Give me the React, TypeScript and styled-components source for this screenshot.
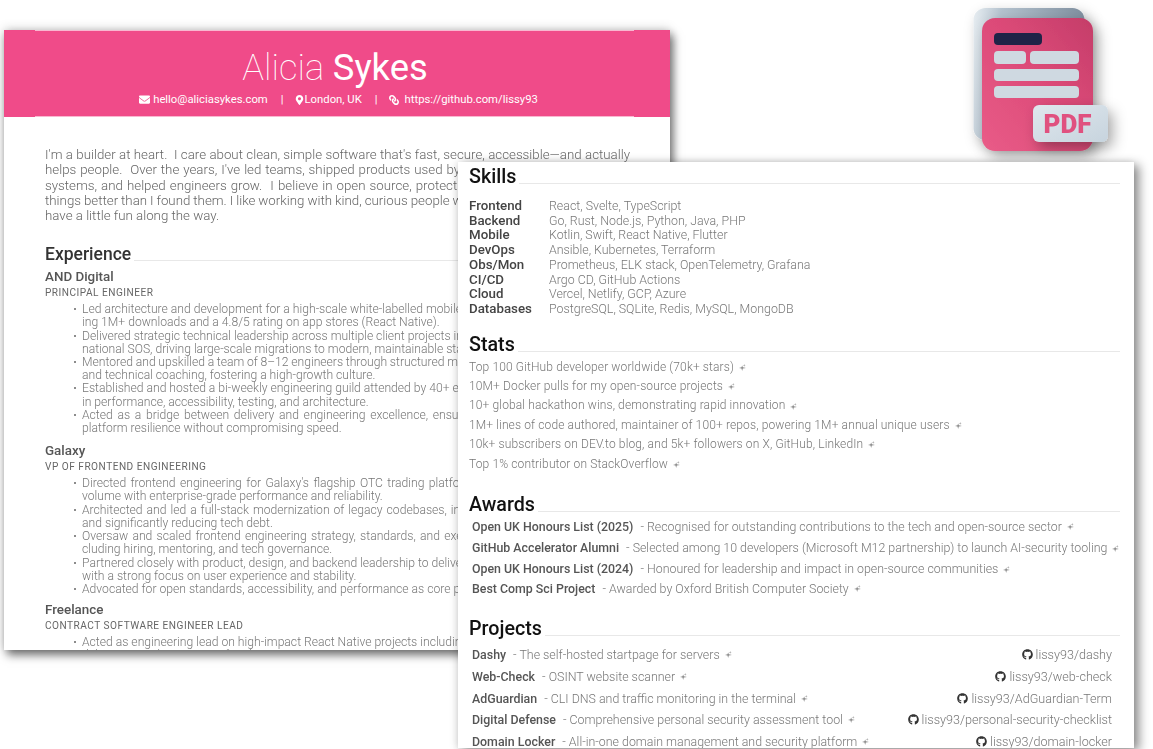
import React from "react";
import styled, { createGlobalStyle } from "styled-components";
import { FaEnvelope, FaMapMarkerAlt, FaLink, FaGithub } from "react-icons/fa";

const Global = createGlobalStyle`
  html, body { margin: 0; padding: 0; background: #fff; }
  body { font-family: Roboto, "Liberation Sans", sans-serif; }
`;

const Canvas = styled.div`
  position: relative;
  width: 1153px;
  height: 749px;
  overflow: hidden;
  background: #fff;
`;

const ResumeSheet = styled.section`
  position: absolute;
  left: 4px;
  top: 30px;
  width: 666px;
  height: 620px;
  background: #fff;
  box-shadow: 3px 5px 9px rgba(0, 0, 0, 0.55), 0 -1px 10px rgba(0, 0, 0, 0.18);
  overflow: hidden;
  filter: blur(0.45px);
`;

const Banner = styled.header`
  height: 87px;
  box-sizing: border-box;
  background: #f04b89;
  color: #fff;
  display: flex;
  flex-direction: column;
  align-items: center;
  position: relative;
  padding-top: 18px;
  &::before, &::after {
    content: "";
    position: absolute;
    left: 31px;
    right: 36px;
    height: 1px;
    background: rgba(255, 255, 255, 0.6);
  }
  &::before { top: 0; }
  &::after { bottom: 0; }
`;

const Name = styled.h1`
  margin: 0 4px 0 0;
  font-size: 36.4px;
  line-height: 40px;
  font-weight: 100;
  b { font-weight: 400; }
`;

const Contacts = styled.div`
  display: flex;
  align-items: center;
  margin-top: 5px;
  margin-left: 3px;
  font-size: 11.3px;
  line-height: 13px;
  font-weight: 400;
`;

const Contact = styled.span`
  display: flex;
  align-items: center;
`;

const MailIcon = styled(FaEnvelope)`
  width: 11px;
  height: 11px;
  margin-right: 3px;
`;

const PinIcon = styled(FaMapMarkerAlt)`
  width: 9px;
  height: 10px;
  margin-right: 1px;
`;

const ChainIcon = styled(FaLink)`
  width: 10px;
  height: 10px;
  margin-right: 6px;
  transform: scaleX(-1);
`;

const Pipe = styled.span`
  margin: 0 11px 0 13px;
`;

const ResumeBody = styled.div`
  padding: 30px 0 0 41px;
`;

const Intro = styled.div`
  font-size: 13.3px;
  line-height: 15.25px;
  font-weight: 300;
  color: #666;
`;

const IntroLine = styled.div<{ $justify?: boolean; $sp?: number }>`
  white-space: nowrap;
  width: 585px;
  word-spacing: ${(p) => p.$sp ?? 0}px;
  text-align-last: ${(p) => (p.$justify ? "justify" : "left")};
`;

const SectionHead = styled.div<{ $gap: number }>`
  display: flex;
  align-items: flex-end;
  margin-top: ${(p) => p.$gap}px;
  font-size: 19.7px;
  line-height: 20px;
  font-weight: 500;
  color: #111;
  &::after {
    content: "";
    flex: 1;
    height: 1px;
    background: #e8e8e8;
    margin: 0 0 3px 3px;
  }
`;

const ExperienceHead = styled(SectionHead)`
  width: 590px;
  font-size: 17.5px;
  color: #333;
`;

const Employer = styled.div<{ $gap: number }>`
  margin-top: ${(p) => p.$gap}px;
  font-size: 13.4px;
  line-height: 15px;
  font-weight: 500;
  color: #555;
`;

const Role = styled.div`
  margin-top: 2px;
  font-size: 10.1px;
  line-height: 13px;
  letter-spacing: 0.5px;
  color: #666;
`;

const Bullets = styled.ul`
  list-style: none;
  margin: 4px 0 0;
  padding: 0 0 0 37px;
  font-size: 12.15px;
  line-height: 13.2px;
  font-weight: 300;
  color: #777;
`;

const Bullet = styled.li`
  position: relative;
  white-space: nowrap;
  &::before {
    content: "";
    position: absolute;
    left: -8px;
    top: 5px;
    width: 2px;
    height: 2px;
    border-radius: 50%;
    background: #666;
  }
`;

const Spaced = styled.span<{ $sp: number }>`
  word-spacing: ${(p) => p.$sp}px;
`;

const ExtrasSheet = styled.section`
  position: absolute;
  left: 458px;
  top: 162px;
  width: 676px;
  height: 586px;
  box-sizing: border-box;
  padding: 5px 14px 0 11px;
  background: #fff;
  box-shadow: 5px 3px 10px rgba(0, 0, 0, 0.45), -2px 0 8px rgba(0, 0, 0, 0.1);
  overflow: hidden;
  filter: blur(0.4px);
`;

const SkillGrid = styled.dl`
  display: grid;
  grid-template-columns: 80px 1fr;
  margin: 12px 0 0;
  font-size: 12.4px;
  line-height: 14.7px;
  color: #777;
  font-weight: 300;
  dt { font-weight: 500; font-size: 13.3px; color: #444; }
  dd { margin: 0; }
`;

const StatList = styled.div`
  margin-top: 3px;
  font-size: 12.03px;
  line-height: 19.4px;
  font-weight: 300;
  letter-spacing: 0.12px;
  color: #777;
`;

const StatRow = styled.div`
  display: flex;
  align-items: center;
  white-space: nowrap;
`;

const AwardList = styled.div`
  margin-top: 1px;
  padding-left: 3px;
  font-size: 12.37px;
  font-weight: 300;
  color: #777;
`;

const AwardRow = styled.div<{ $h: number }>`
  display: flex;
  align-items: center;
  white-space: nowrap;
  height: ${(p) => p.$h}px;
`;

const Strong = styled.strong`
  font-weight: 500;
  color: #555;
  margin-right: 7px;
`;

const ProjectList = styled.div`
  margin-top: 5px;
  padding: 0 8px 0 3px;
  font-size: 12.4px;
  font-weight: 300;
  color: #777;
`;

const ProjectRow = styled.div`
  display: flex;
  align-items: center;
  justify-content: space-between;
  height: 21.6px;
  white-space: nowrap;
`;

const ProjectInfo = styled.div`
  display: flex;
  align-items: center;
`;

const RepoLink = styled.span`
  display: flex;
  align-items: center;
  font-size: 12.6px;
  color: #777;
  svg { width: 11px; height: 11px; margin-right: 3px; color: #333; }
`;

const Badge = styled.div`
  position: absolute;
  left: 970px;
  top: 4px;
  width: 144px;
  height: 156px;
  filter: blur(0.5px);
`;

const PdfArt = styled.svg`
  display: block;
  width: 144px;
  height: 156px;
  overflow: visible;
`;

const SparkIcon = styled.svg`
  width: 7px;
  height: 7px;
  margin-left: 5px;
  flex: none;
`;

const Spark = () => (
  <SparkIcon viewBox="0 0 10 10" aria-hidden="true">
    <path d="M4.5 2 5.4 4.8 10 5.6 5.4 6.3 4.5 10 3.6 6.3 0 5.6 3.6 4.8Z" fill="#888" />
    <path d="M7.5 0 8 1.4 9.5 2 8 2.5 7.5 4 7 2.5 5.6 2 7 1.4Z" fill="#aaa" />
  </SparkIcon>
);

const skills = [
  ["Frontend", "React, Svelte, TypeScript"],
  ["Backend", "Go, Rust, Node.js, Python, Java, PHP"],
  ["Mobile", "Kotlin, Swift, React Native, Flutter"],
  ["DevOps", "Ansible, Kubernetes, Terraform"],
  ["Obs/Mon", "Prometheus, ELK stack, OpenTelemetry, Grafana"],
  ["CI/CD", "Argo CD, GitHub Actions"],
  ["Cloud", "Vercel, Netlify, GCP, Azure"],
  ["Databases", "PostgreSQL, SQLite, Redis, MySQL, MongoDB"],
];

const stats = [
  "Top 100 GitHub developer worldwide (70k+ stars)",
  "10M+ Docker pulls for my open-source projects",
  "10+ global hackathon wins, demonstrating rapid innovation",
  "1M+ lines of code authored, maintainer of 100+ repos, powering 1M+ annual unique users",
  "10k+ subscribers on DEV.to blog, and 5k+ followers on X, GitHub, LinkedIn",
  "Top 1% contributor on StackOverflow",
];

const awards: [string, string, number][] = [
  ["Open UK Honours List (2025)", "- Recognised for outstanding contributions to the tech and open-source sector", 21],
  ["GitHub Accelerator Alumni", "- Selected among 10 developers (Microsoft M12 partnership) to launch AI-security tooling", 22],
  ["Open UK Honours List (2024)", "- Honoured for leadership and impact in open-source communities", 20],
  ["Best Comp Sci Project", "- Awarded by Oxford British Computer Society", 19],
];

const projects = [
  ["Dashy", "- The self-hosted startpage for servers", "lissy93/dashy"],
  ["Web-Check", "- OSINT website scanner", "lissy93/web-check"],
  ["AdGuardian", "- CLI DNS and traffic monitoring in the terminal", "lissy93/AdGuardian-Term"],
  ["Digital Defense", "- Comprehensive personal security assessment tool", "lissy93/personal-security-checklist"],
  ["Domain Locker", "- All-in-one domain management and security platform", "lissy93/domain-locker"],
];

const jobs = [
  {
    name: "AND Digital",
    role: "PRINCIPAL ENGINEER",
    gap: 5,
    lines: [
      [
        "Led architecture and development for a high-scale white-labelled mobile app, reach-",
        "ing 1M+ downloads and a 4.8/5 rating on app stores (React Native).",
      ],
      [
        "Delivered strategic technical leadership across multiple client projects including Inter-",
        "national SOS, driving large-scale migrations to modern, maintainable stacks.",
      ],
      [
        <Spaced key="w" $sp={-0.3}>Mentored and upskilled a team of 8–12 engineers through structured mentoring</Spaced>,
        "and technical coaching, fostering a high-growth culture.",
      ],
      [
        "Established and hosted a bi-weekly engineering guild attended by 40+ engineers",
        "in performance, accessibility, testing, and architecture.",
      ],
      [
        <Spaced key="w" $sp={1.7}>Acted as a bridge between delivery and engineering excellence, ensuring</Spaced>,
        "platform resilience without compromising speed.",
      ],
    ],
  },
  {
    name: "Galaxy",
    role: "VP OF FRONTEND ENGINEERING",
    gap: 8,
    lines: [
      [
        <Spaced key="w" $sp={1.4}>Directed frontend engineering for Galaxy's flagship OTC trading platform</Spaced>,
        "volume with enterprise-grade performance and reliability.",
      ],
      [
        <Spaced key="w" $sp={1}>Architected and led a full-stack modernization of legacy codebases, improving</Spaced>,
        "and significantly reducing tech debt.",
      ],
      [
        <Spaced key="w" $sp={1.3}>Oversaw and scaled frontend engineering strategy, standards, and execution, in-</Spaced>,
        "cluding hiring, mentoring, and tech governance.",
      ],
      [
        "Partnered closely with product, design, and backend leadership to deliver",
        "with a strong focus on user experience and stability.",
      ],
      ["Advocated for open standards, accessibility, and performance as core principles."],
    ],
  },
  {
    name: "Freelance",
    role: "CONTRACT SOFTWARE ENGINEER LEAD",
    gap: 6,
    lines: [["Acted as engineering lead on high-impact React Native projects including"], ["delivering production apps for clients."]],
  },
];

const PdfIcon = () => (
  <PdfArt viewBox="0 0 144 156">
    <defs>
      <linearGradient id="back" x1="0" y1="0" x2="1" y2="0.15">
        <stop offset="0" stopColor="#e8eef2" />
        <stop offset="0.25" stopColor="#b4c2ce" />
        <stop offset="1" stopColor="#7e8e9e" />
      </linearGradient>
      <linearGradient id="front" x1="0" y1="1" x2="1" y2="0">
        <stop offset="0" stopColor="#e95c88" />
        <stop offset="0.55" stopColor="#dc4a78" />
        <stop offset="1" stopColor="#c43d69" />
      </linearGradient>
      <linearGradient id="tag" x1="0" y1="0" x2="1" y2="1">
        <stop offset="0" stopColor="#dfe7ed" />
        <stop offset="1" stopColor="#c7d4de" />
      </linearGradient>
      <filter id="soft" x="-40%" y="-40%" width="200%" height="200%">
        <feDropShadow dx="5" dy="6" stdDeviation="7" floodColor="#000" floodOpacity="0.32" />
      </filter>
    </defs>
    <rect x="3.5" y="4" width="111" height="132" rx="12" fill="url(#back)" filter="url(#soft)" />
    <rect x="12" y="14" width="111" height="133" rx="13" fill="url(#front)" filter="url(#soft)" />
    <rect x="24" y="29" width="48" height="12" rx="4" fill="#1f2347" />
    <rect x="24" y="47" width="32" height="13" rx="4" fill="#cfd9e1" />
    <rect x="60" y="47" width="49" height="13" rx="4" fill="#cfd9e1" />
    <rect x="24" y="65" width="85" height="12" rx="4" fill="#cfd9e1" />
    <rect x="24" y="82" width="85" height="12" rx="4" fill="#cfd9e1" />
    <rect x="63" y="101" width="75" height="37" rx="6" fill="url(#tag)" filter="url(#soft)" />
    <text x="97.5" y="129" textAnchor="middle" fontFamily="Roboto, sans-serif" fontWeight="900" fontSize="26" fill="#e0517f">
      PDF
    </text>
  </PdfArt>
);

export default function App() {
  return (
    <Canvas>
      <Global />
      <ResumeSheet>
        <Banner>
          <Name>
            Alicia <b>Sykes</b>
          </Name>
          <Contacts>
            <Contact>
              <MailIcon />
              hello@aliciasykes.com
            </Contact>
            <Pipe>|</Pipe>
            <Contact>
              <PinIcon />
              London, UK
            </Contact>
            <Pipe>|</Pipe>
            <Contact>
              <ChainIcon />
              https://github.com/lissy93
            </Contact>
          </Contacts>
        </Banner>
        <ResumeBody>
          <Intro>
            <IntroLine $justify>
              I'm a builder at heart.&nbsp; I care about clean, simple software that's fast, secure, accessible—and actually
            </IntroLine>
            <IntroLine $sp={0.7}>helps people.&nbsp; Over the years, I've led teams, shipped products used by millions of people, built</IntroLine>
            <IntroLine $sp={0.8}>systems, and helped engineers grow.&nbsp; I believe in open source, protecting privacy, and leaving</IntroLine>
            <IntroLine $sp={-0.3}>things better than I found them. I like working with kind, curious people who care, and I try to</IntroLine>
            <IntroLine>have a little fun along the way.</IntroLine>
          </Intro>
          <ExperienceHead $gap={21}>Experience</ExperienceHead>
          {jobs.map((job) => (
            <React.Fragment key={job.name}>
              <Employer $gap={job.gap}>{job.name}</Employer>
              <Role>{job.role}</Role>
              <Bullets>
                {job.lines.map((item, i) => (
                  <Bullet key={i}>
                    {item.map((line, j) => (
                      <div key={j}>{line}</div>
                    ))}
                  </Bullet>
                ))}
              </Bullets>
            </React.Fragment>
          ))}
        </ResumeBody>
      </ResumeSheet>

      <Badge>
        <PdfIcon />
      </Badge>

      <ExtrasSheet>
        <SectionHead $gap={0}>Skills</SectionHead>
        <SkillGrid>
          {skills.map(([k, v]) => (
            <React.Fragment key={k}>
              <dt>{k}</dt>
              <dd>{v}</dd>
            </React.Fragment>
          ))}
        </SkillGrid>
        <SectionHead $gap={18}>Stats</SectionHead>
        <StatList>
          {stats.map((s) => (
            <StatRow key={s}>
              {s}
              <Spark />
            </StatRow>
          ))}
        </StatList>
        <SectionHead $gap={21}>Awards</SectionHead>
        <AwardList>
          {awards.map(([t, d, h]) => (
            <AwardRow key={t} $h={h}>
              <Strong>{t}</Strong>
              {d}
              <Spark />
            </AwardRow>
          ))}
        </AwardList>
        <SectionHead $gap={21}>Projects</SectionHead>
        <ProjectList>
          {projects.map(([t, d, r]) => (
            <ProjectRow key={t}>
              <ProjectInfo>
                <Strong>{t}</Strong>
                {d}
                <Spark />
              </ProjectInfo>
              <RepoLink>
                <FaGithub />
                {r}
              </RepoLink>
            </ProjectRow>
          ))}
        </ProjectList>
      </ExtrasSheet>
    </Canvas>
  );
}
